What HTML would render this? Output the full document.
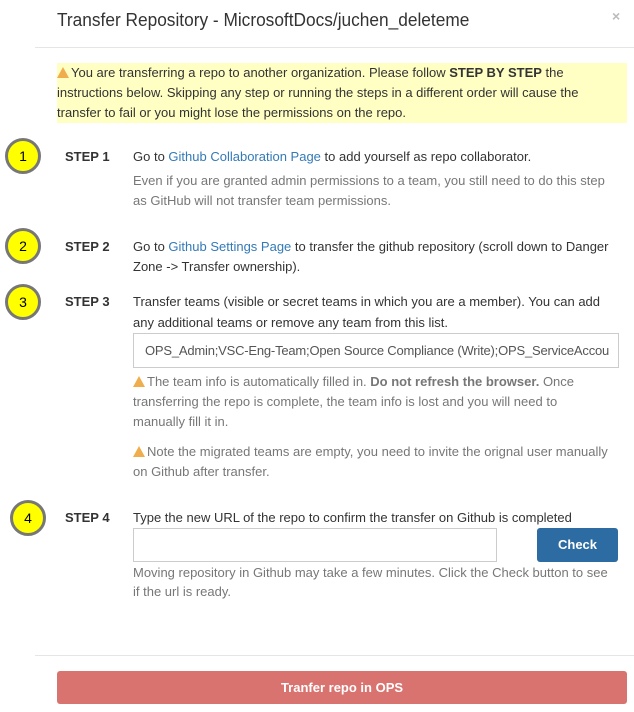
<!DOCTYPE html>
<html><head><meta charset="utf-8"><style>
body{margin:0;width:634px;height:712px;background:#fff;position:relative;overflow:hidden;font-family:"Liberation Sans",sans-serif;color:#333}
.t{position:absolute;white-space:nowrap;font-size:13px;line-height:20px;letter-spacing:0px}
.g{color:#777}
a{color:#337ab7;text-decoration:none}
.c{position:absolute;width:30px;height:30px;border:3px solid #777;border-radius:50%;background:#ffff00;font-size:14px;line-height:30px;text-align:center;color:#000}
.s{position:absolute;font-weight:bold;font-size:13px;line-height:20px;left:65px}
.w{display:inline-block;width:0;height:0;border-left:6px solid transparent;border-right:6px solid transparent;border-bottom:11px solid #f0ad4e;vertical-align:-1px;margin-right:2px}
</style></head><body>
<div class="t" style="left:57px;top:8px;font-size:18px;line-height:24px;transform:scaleX(0.96);transform-origin:0 0">Transfer Repository - MicrosoftDocs/juchen_deleteme</div>
<div style="position:absolute;left:612px;top:8px;color:#bbb;font-size:14px;font-weight:bold">×</div>
<div style="position:absolute;left:35px;top:47px;width:599px;height:1px;background:#e5e5e5"></div>
<div style="position:absolute;left:57px;top:63px;width:570px;height:60px;background:#ffffc4"></div>
<div class="t" style="left:57px;top:63px"><span class="w"></span>You are transferring a repo to another organization. Please follow <b>STEP BY STEP</b> the</div>
<div class="t" style="left:57px;top:83px">instructions below. Skipping any step or running the steps in a different order will cause the</div>
<div class="t" style="left:57px;top:103px">transfer to fail or you might lose the permissions on the repo.</div>

<div class="c" style="left:5px;top:138px">1</div>
<div class="s" style="top:147px">STEP 1</div>
<div class="t" style="left:133px;top:147px">Go to <a>Github Collaboration Page</a> to add yourself as repo collaborator.</div>
<div class="t g" style="left:133px;top:171px">Even if you are granted admin permissions to a team, you still need to do this step</div>
<div class="t g" style="left:133px;top:191px">as GitHub will not transfer team permissions.</div>

<div class="c" style="left:5px;top:228px">2</div>
<div class="s" style="top:237px">STEP 2</div>
<div class="t" style="left:133px;top:237px">Go to <a>Github Settings Page</a> to transfer the github repository (scroll down to Danger</div>
<div class="t" style="left:133px;top:257px">Zone -&gt; Transfer ownership).</div>

<div class="c" style="left:5px;top:284px">3</div>
<div class="s" style="top:292px">STEP 3</div>
<div class="t" style="left:133px;top:292px">Transfer teams (visible or secret teams in which you are a member). You can add</div>
<div class="t" style="left:133px;top:313px">any additional teams or remove any team from this list.</div>
<div style="position:absolute;left:133px;top:333px;width:484px;height:33px;border:1px solid #ccc;overflow:hidden"><div class="t" style="left:11px;top:7px;color:#555;letter-spacing:-0.2px">OPS_Admin;VSC-Eng-Team;Open Source Compliance (Write);OPS_ServiceAccou</div></div>
<div class="t g" style="left:133px;top:372px"><span class="w"></span>The team info is automatically filled in. <b>Do not refresh the browser.</b> Once</div>
<div class="t g" style="left:133px;top:392px">transferring the repo is complete, the team info is lost and you will need to</div>
<div class="t g" style="left:133px;top:412px">manually fill it in.</div>
<div class="t g" style="left:133px;top:442px"><span class="w"></span>Note the migrated teams are empty, you need to invite the orignal user manually</div>
<div class="t g" style="left:133px;top:462px">on Github after transfer.</div>

<div class="c" style="left:10px;top:500px">4</div>
<div class="s" style="top:508px">STEP 4</div>
<div class="t" style="left:133px;top:508px">Type the new URL of the repo to confirm the transfer on Github is completed</div>
<div style="position:absolute;left:133px;top:528px;width:362px;height:32px;border:1px solid #ccc"></div>
<div style="position:absolute;left:537px;top:528px;width:81px;height:34px;background:#2d6ca2;border-radius:3px;color:#fff;font-weight:bold;font-size:13px;line-height:34px;text-align:center">Check</div>
<div class="t g" style="left:133px;top:563px">Moving repository in Github may take a few minutes. Click the Check button to see</div>
<div class="t g" style="left:133px;top:582px">if the url is ready.</div>

<div style="position:absolute;left:35px;top:655px;width:599px;height:1px;background:#e5e5e5"></div>
<div style="position:absolute;left:57px;top:671px;width:570px;height:33px;background:#d9736f;border-radius:3px;color:#fff;font-weight:bold;font-size:13px;line-height:33px;text-align:center">Tranfer repo in OPS</div>
</body></html>
